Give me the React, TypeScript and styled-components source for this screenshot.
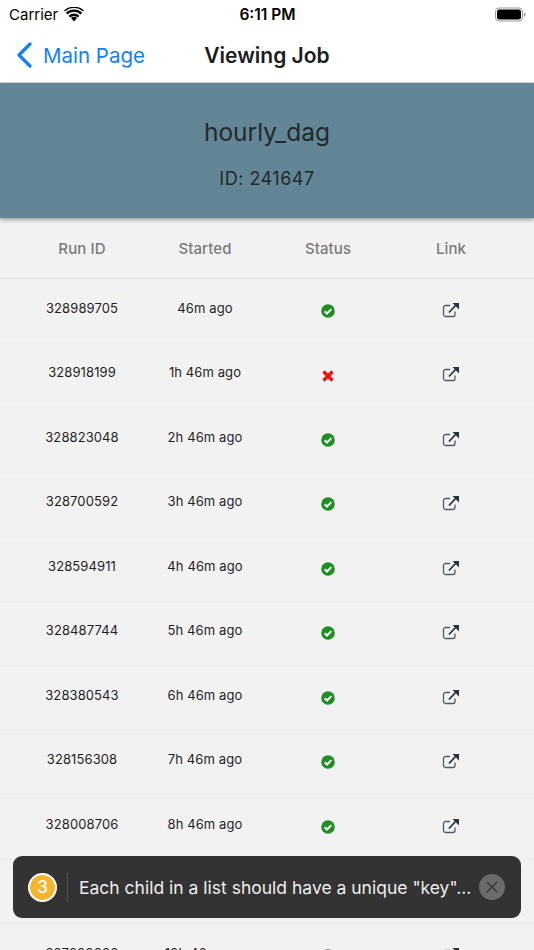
import React from 'react';
import styled, { createGlobalStyle } from 'styled-components';

const GlobalStyle = createGlobalStyle`
  html, body {
    margin: 0;
    padding: 0;
    height: 950px;
    overflow: hidden;
    background: #f2f2f2;
    font-family: Inter, "Liberation Sans", sans-serif;
  }
`;

const Screen = styled.div`
  position: relative;
  width: 534px;
  height: 950px;
  overflow: hidden;
  background: #f2f2f2;
`;

const Top = styled.div`
  background: #fff;
  border-bottom: 1px solid #d8d8d8;
  height: 82px;
`;

const StatusBar = styled.div`
  display: grid;
  grid-template-columns: 1fr auto 1fr;
  align-items: center;
  height: 28px;
  padding: 0 8px 0 9px;
  color: #000;
`;

const Carrier = styled.div`
  display: flex;
  align-items: center;
  gap: 6px;
  font-size: 15px;
`;

const Clock = styled.div`
  font-size: 15.5px;
  font-weight: 600;
`;

const Battery = styled.div`
  justify-self: end;
  display: flex;
`;

const NavBar = styled.div`
  position: relative;
  display: flex;
  align-items: center;
  justify-content: center;
  height: 54px;
`;

const Back = styled.div`
  position: absolute;
  left: 16px;
  top: 0;
  bottom: 0;
  display: flex;
  align-items: center;
  gap: 11px;
  color: #147efb;
  font-size: 20.5px;
`;

const NavTitle = styled.div`
  font-size: 21px;
  font-weight: 600;
  color: #1c1c1e;
`;

const Banner = styled.div`
  position: relative;
  height: 135px;
  background: #628695;
  box-shadow: 0 2px 4px rgba(0, 0, 0, 0.35);
  display: flex;
  flex-direction: column;
  align-items: center;
  color: #22292c;
`;

const JobName = styled.div`
  margin-top: 33px;
  font-size: 24.5px;
  line-height: 32px;
`;

const JobId = styled.div`
  margin-top: 19px;
  font-size: 18px;
  line-height: 24px;
  letter-spacing: 0.5px;
`;

const Row = styled.div<{ $head?: boolean }>`
  display: grid;
  grid-template-columns: repeat(4, 123px);
  align-items: center;
  justify-items: center;
  padding: 0 20.5px;
  height: ${p => (p.$head ? '60px' : '63.5px')};
  border-bottom: 1px solid ${p => (p.$head ? '#e0e0e6' : '#ebebeb')};
  color: ${p => (p.$head ? '#7a7a7a' : '#1f1f1f')};
  font-size: ${p => (p.$head ? '15px' : '13px')};
  font-weight: ${p => (p.$head ? 500 : 400)};
  letter-spacing: ${p => (p.$head ? '0.1px' : '0.1px')};
`;

const Cell = styled.div`
  margin-top: -6px;
`;

const IconCell = styled.div<{ $link?: boolean }>`
  display: flex;
  margin-top: ${p => (p.$link ? '-2px' : '0')};
`;

const Toast = styled.div`
  position: absolute;
  left: 13px;
  right: 13px;
  top: 856px;
  height: 62px;
  box-sizing: border-box;
  padding: 0 16px 0 15px;
  border-radius: 9px;
  background: #333;
  display: flex;
  align-items: center;
  color: #eee;
`;

const Count = styled.div`
  width: 25px;
  height: 25px;
  border: 2px solid #fff;
  border-radius: 50%;
  background: #f5b52e;
  color: #fff;
  font-size: 17px;
  font-weight: 500;
  display: flex;
  align-items: center;
  justify-content: center;
`;

const Divider = styled.div`
  width: 1px;
  height: 29px;
  margin: 0 11px 0 10px;
  background: #555;
`;

const Message = styled.div`
  flex: 1;
  min-width: 0;
  font-size: 17.5px;
  white-space: nowrap;
`;

const Close = styled.div`
  width: 26px;
  height: 26px;
  border-radius: 50%;
  background: #6b6b6b;
  display: flex;
  align-items: center;
  justify-content: center;
`;

const runs = [
  ['328989705', '46m ago', true],
  ['328918199', '1h 46m ago', false],
  ['328823048', '2h 46m ago', true],
  ['328700592', '3h 46m ago', true],
  ['328594911', '4h 46m ago', true],
  ['328487744', '5h 46m ago', true],
  ['328380543', '6h 46m ago', true],
  ['328156308', '7h 46m ago', true],
  ['328008706', '8h 46m ago', true],
  ['327901455', '9h 46m ago', true],
  ['327800000', '10h 46m ago', true],
] as [string, string, boolean][];

const Wifi = () => (
  <svg width="20" height="15" viewBox="0 0 20 15">
    <path d="M10 14.5l-3-3.4a4.4 4.4 0 0 1 6 0z" fill="#000" />
    <path d="M4.6 8.7a8 8 0 0 1 10.8 0l-1.5 1.7a5.8 5.8 0 0 0-7.8 0z" fill="#000" />
    <path d="M1.9 5.7a12 12 0 0 1 16.2 0l-1.5 1.7a9.8 9.8 0 0 0-13.2 0z" fill="#000" />
    <path d="M0 3.4a15 15 0 0 1 20 0l-1 1.1a13.4 13.4 0 0 0-18 0z" fill="#000" />
  </svg>
);

const BatteryIcon = () => (
  <svg width="31" height="15" viewBox="0 0 31 15">
    <rect x="0.5" y="1" width="27" height="13" rx="3.5" fill="none" stroke="#999" />
    <rect x="2" y="2.5" width="24" height="10" rx="2.2" fill="#000" />
    <path d="M29 5.5c1 .3 1.5 1 1.5 2s-.5 1.7-1.500 2z" fill="#999" />
  </svg>
);

const Chevron = () => (
  <svg width="16" height="26" viewBox="0 0 16 26">
    <path d="M14 2L3 13l11 11" fill="none" stroke="#147efb" strokeWidth="3.2" strokeLinecap="round" strokeLinejoin="round" />
  </svg>
);

const Check = () => (
  <svg width="14" height="14" viewBox="0 0 14 14">
    <circle cx="7" cy="7" r="6.8" fill="#1f8f24" />
    <path d="M3.7 7.2l2.3 2.3 4.3-4.4" fill="none" stroke="#fff" strokeWidth="2" />
  </svg>
);

const Cross = () => (
  <svg width="14" height="14" viewBox="0 -1 14 14">
    <path d="M2.5 2.500l9 9M11.500 2.500l-9 9" fill="none" stroke="#f60d0d" strokeWidth="3.2" />
  </svg>
);

const ExternalLink = () => (
  <svg width="18" height="16" viewBox="0 0 17 16">
    <path d="M12.5 9.500v3a2 2 0 0 1-2 2H3a2 2 0 0 1-2-2V5.500a2 2 0 0 1 2-2h4.500" fill="none" stroke="#4f5b63" strokeWidth="1.3" />
    <path d="M6.5 10.500L13 3.500" fill="none" stroke="#26323a" strokeWidth="1.8" />
    <path d="M10 1h6.500v6.500z" fill="#26323a" />
  </svg>
);

const CloseIcon = () => (
  <svg width="12" height="12" viewBox="0 0 12 12">
    <path d="M1 1l10 10M11 1L1 11" fill="none" stroke="#333" strokeWidth="1.4" />
  </svg>
);

export default function App() {
  return (
    <Screen>
      <GlobalStyle />
      <Top>
        <StatusBar>
          <Carrier>Carrier <Wifi /></Carrier>
          <Clock>6:11 PM</Clock>
          <Battery><BatteryIcon /></Battery>
        </StatusBar>
        <NavBar>
          <Back><Chevron /> Main Page</Back>
          <NavTitle>Viewing Job</NavTitle>
        </NavBar>
      </Top>
      <Banner>
        <JobName>hourly_dag</JobName>
        <JobId>ID: 241647</JobId>
      </Banner>
      <Row $head>
        <div>Run ID</div>
        <div>Started</div>
        <div>Status</div>
        <div>Link</div>
      </Row>
      {runs.map(([id, started, ok]) => (
        <Row key={id}>
          <Cell>{id}</Cell>
          <Cell>{started}</Cell>
          <IconCell>{ok ? <Check /> : <Cross />}</IconCell>
          <IconCell $link><ExternalLink /></IconCell>
        </Row>
      ))}
      <Toast>
        <Count>3</Count>
        <Divider />
        <Message>Each child in a list should have a unique "key"...</Message>
        <Close><CloseIcon /></Close>
      </Toast>
    </Screen>
  );
}
